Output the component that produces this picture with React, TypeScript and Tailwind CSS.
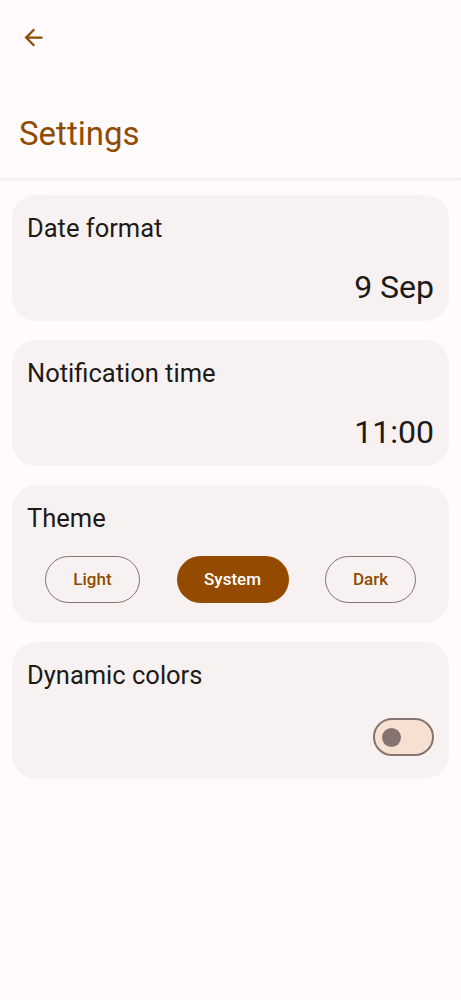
const font = { fontFamily: "Roboto, 'Noto Sans', sans-serif" }

const ArrowBack = () => (
  <svg width="27" height="27" viewBox="0 0 24 24" fill="#8f4c00">
    <path d="M20 11H7.83l5.59-5.59L12 4l-8 8 8 8 1.41-1.41L7.83 13H20v-2z" />
  </svg>
)

const Card = ({ children, className }: { children: React.ReactNode; className?: string }) => (
  <div className={`rounded-[24px] bg-[#f7f2f1] ${className ?? ""}`}>{children}</div>
)

const ValueCard = ({ title, value }: { title: string; value: string }) => (
  <Card className="h-[126px] px-[15px] pt-[18px]">
    <p className="text-[25.5px] leading-[30px] text-[#201a17]">{title}</p>
    <p className="mt-[25px] text-right text-[32px] leading-[38px] text-[#201a17]">{value}</p>
  </Card>
)

export default function App() {
  return (
    <div className="min-h-[1000px] w-[461px] bg-[#fffbfd]" style={font}>
      <header className="h-[178px] bg-[#fffbfd] shadow-[0_2px_3px_rgba(120,80,60,0.12)] relative z-10">
        <div className="px-[20px] pt-[24px]">
          <ArrowBack />
        </div>
        <h1 className="px-[19px] pt-[64px] text-[33px] leading-[38px] text-[#8f4c00]">Settings</h1>
      </header>

      <main className="flex flex-col gap-[19px] px-[12px] pt-[17px]">
        <ValueCard title="Date format" value="9 Sep" />
        <ValueCard title="Notification time" value="11:00" />

        <Card className="h-[138px] px-[15px] pt-[18px]">
          <p className="text-[25.5px] leading-[30px] text-[#201a17]">Theme</p>
          <div className="mt-[23px] flex items-center justify-between pl-[18px] pr-[18px]">
            <button className="h-[47px] w-[95px] rounded-full border border-[#857370] text-[17px] font-medium text-[#8f4c00]">
              Light
            </button>
            <button className="h-[47px] w-[112px] rounded-full bg-[#944b00] text-[17px] font-medium text-white">
              System
            </button>
            <button className="h-[47px] w-[91px] rounded-full border border-[#857370] text-[17px] font-medium text-[#8f4c00]">
              Dark
            </button>
          </div>
        </Card>

        <Card className="h-[137px] px-[15px] pt-[18px]">
          <p className="text-[25.5px] leading-[30px] text-[#201a17]">Dynamic colors</p>
          <div className="mt-[28px] flex justify-end">
            <div className="flex h-[38px] w-[61px] items-center rounded-full border-[2.5px] border-[#857370] bg-[#f5e0d2] pl-[7px]">
              <div className="h-[19px] w-[19px] rounded-full bg-[#857370]" />
            </div>
          </div>
        </Card>
      </main>
    </div>
  )
}
